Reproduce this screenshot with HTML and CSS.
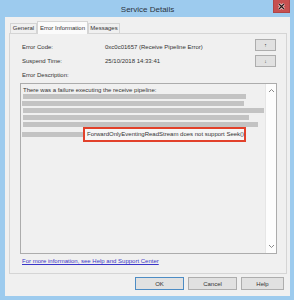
FILE: index.html
```html
<!DOCTYPE html>
<html lang="en">
<head>
    <meta charset="UTF-8">
    <title>Service Details</title>
    <link rel="stylesheet" href="styles.css">
</head>
<body>
    <div class="window">
        <div class="titlebar">
            <span class="title">Service Details</span>
            <div class="close">
                <svg width="7" height="7" viewBox="0 0 7 7">
                    <path d="M1 1L6 6M6 1L1 6" stroke="#f4eaea" stroke-width="2.6"/>
                    <path d="M1 1L6 6M6 1L1 6" stroke="#2b1414" stroke-width="1.3"/>
                </svg>
            </div>
        </div>

        <div class="client">
            <div class="tabs">
                <div class="tab tab-general">General</div>
                <div class="tab tab-error active">Error Information</div>
                <div class="tab tab-messages">Messages</div>
            </div>

            <div class="panel">
                <div class="head">
                    <div class="fields">
                        <div class="row"><span class="label">Error Code:</span><span>0xc0c01657 (Receive Pipeline Error)</span></div>
                        <div class="row"><span class="label">Suspend Time:</span><span>25/10/2018 14:33:41</span></div>
                        <div class="row"><span class="label">Error Description:</span></div>
                    </div>
                    <div class="nav">
                        <button class="btn small">&uarr;</button>
                        <button class="btn small">&darr;</button>
                    </div>
                </div>

                <div class="textbox">
                    <div class="text">
                        <div class="line">There was a failure executing the receive pipeline:</div>
                        <div class="bar b1"></div>
                        <div class="bar b2"></div>
                        <div class="bar b3"></div>
                        <div class="bar b4"></div>
                        <div class="bar b5"></div>
                        <div class="last">
                            <div class="bar b6"></div>
                            <div class="mark">ForwardOnlyEventingReadStream does not support Seek()</div>
                        </div>
                    </div>
                    <div class="scroll">
                        <div class="arrow">
                            <svg width="7" height="5" viewBox="0 0 7 5"><path d="M1 4L3.5 1.5L6 4" fill="none" stroke="#8a8a8a"/></svg>
                        </div>
                        <div class="track"></div>
                        <div class="arrow">
                            <svg width="7" height="5" viewBox="0 0 7 5"><path d="M1 1L3.5 3.5L6 1" fill="none" stroke="#8a8a8a"/></svg>
                        </div>
                    </div>
                </div>

                <a class="help" href="#">For more information, see Help and Support Center</a>
            </div>

            <div class="buttons">
                <button class="btn wide default">OK</button>
                <button class="btn wide">Cancel</button>
                <button class="btn help-btn">Help</button>
            </div>
        </div>
    </div>
</body>
</html>
```

FILE: styles.css
```css
* {
    box-sizing: border-box;
}

body {
    margin: 0;
    overflow: hidden;
    font-family: "Liberation Sans", Arial, sans-serif;
    font-size: 6px;
    color: #333;
}

.window {
    width: 294px;
    height: 300px;
    display: flex;
    flex-direction: column;
    padding: 0 4px 4px 5px;
    background: #9dcbee;
}

.titlebar {
    height: 17px;
    display: grid;
    grid-template-columns: 17px 1fr 17px;
    align-items: center;
}

.title {
    grid-column: 2;
    text-align: center;
    font-size: 8px;
    color: #2c3440;
    padding-top: 1px;
}

.close {
    grid-column: 3;
    align-self: start;
    height: 13px;
    display: flex;
    align-items: center;
    justify-content: center;
    background: #c75050;
    border: 1px solid #b04545;
    border-top: none;
}

.client {
    flex: 1;
    background: #f0f0f0;
    padding: 4px 3px 0 4px;
}

/* tabs */
.tabs {
    height: 12px;
    display: flex;
    align-items: flex-end;
    margin-left: 1px;
}

.tab {
    height: 10px;
    line-height: 9px;
    text-align: center;
    border: 1px solid #d5d5d5;
    border-bottom: none;
    background: #f0f0f0;
    white-space: nowrap;
}

.tab-general { width: 27px; }
.tab-error { width: 51px; }
.tab-messages { width: 32px; }

.tab.active {
    height: 13px;
    line-height: 12px;
    margin-bottom: -1px;
    background: #fbfbfb;
    position: relative;
    z-index: 1;
}

.panel {
    height: 241px;
    border: 1px solid #d5d5d5;
    padding: 5px 9px 0 10px;
}

.head {
    display: flex;
}

.fields {
    flex: 1;
    padding: 1px 0 0 2px;
}

.row {
    height: 14px;
    line-height: 14px;
    display: flex;
}

.label {
    width: 83px;
}

.nav {
    display: flex;
    flex-direction: column;
    gap: 4px;
    margin-right: 1px;
}

.btn {
    font-family: inherit;
    font-size: 6px;
    color: #333;
    background: #e1e1e1;
    border: 1px solid #adadad;
    padding: 0;
    line-height: 10px;
}

.btn.small {
    width: 21px;
    height: 12px;
    font-size: 5px;
}

/* description box */
.textbox {
    height: 171px;
    margin-top: 1px;
    border: 1px solid #acacac;
    display: flex;
}

.text {
    flex: 1;
    padding: 2px 0 0 1px;
    display: flex;
    flex-direction: column;
    gap: 2px;
}

.line {
    height: 8px;
    line-height: 8px;
    margin-left: 1px;
    margin-bottom: -2px;
    white-space: nowrap;
}

.bar {
    height: 5px;
    background: #c3c3c3;
}

.b1 { width: 223px; margin-left: 1px; }
.b2 { width: 222px; }
.b3 { width: 241px; margin-left: 1px; }
.b4 { width: 226px; margin-left: 1px; }
.b5 { width: 235px; margin-left: 1px; }
.b6 { width: 61px; }

.last {
    display: flex;
    align-items: center;
    margin-top: -2px;
}

.mark {
    height: 15px;
    width: 163px;
    line-height: 11px;
    border: 2px solid #e2412b;
    background: #f6f6f6;
    padding-left: 2px;
    white-space: nowrap;
}

.scroll {
    width: 11px;
    display: flex;
    flex-direction: column;
    background: #fdfdfd;
    border-left: 1px solid #e6e6e6;
}

.arrow {
    height: 13px;
    display: flex;
    align-items: center;
    justify-content: center;
}

.track {
    flex: 1;
}

.help {
    display: block;
    margin: 3px 0 0 2px;
    line-height: 8px;
    color: #3a36c8;
}

/* bottom buttons */
.buttons {
    display: flex;
    justify-content: flex-end;
    gap: 4px;
    margin: 3px 3px 0 0;
}

.btn.wide {
    width: 49px;
    height: 13px;
}

.btn.help-btn {
    width: 43px;
    height: 13px;
}

.btn.default {
    border-color: #4d8cc4;
}
```
